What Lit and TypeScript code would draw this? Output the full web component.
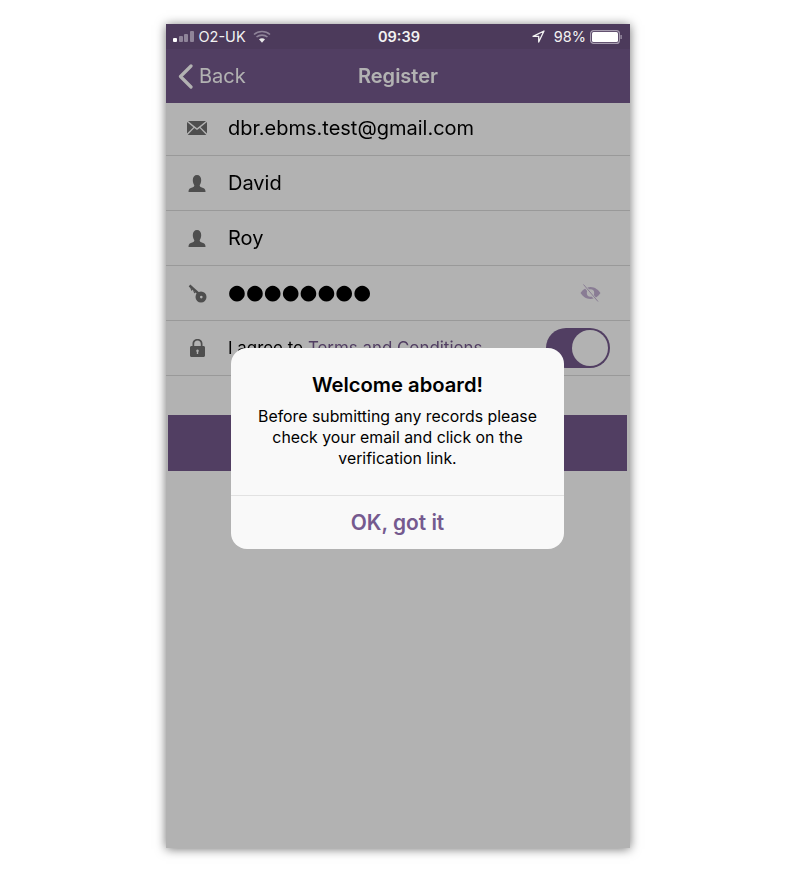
import { LitElement, html, css, svg } from "lit";
import { customElement } from "lit/decorators.js";

const mail = svg`<svg class="ic" width="20" height="14" viewBox="0 0 20 14"><path fill="currentColor" d="M1 0h18l-9 7.200zM0 1l6.400 5.200L0 12.600zM20 1v11.600l-6.400-6.400zM7.300 7l2.700 2.100L12.700 7l6.600 7H.7z"/></svg>`;
const person = svg`<svg class="ic" width="18" height="17" viewBox="0 0 18 17"><path fill="currentColor" d="M9 0c2.600 0 4.200 2 4.200 5 0 2-.6 3.800-1.400 5-.3.8 0 1.500.8 2 1.500.8 3.700 1 4.400 2.500.3.6.5 1.500.5 2.500H.5c0-1 .2-1.900.5-2.500.7-1.500 2.900-1.700 4.400-2.500.8-.5 1.100-1.200.8-2-.8-1.200-1.400-3-1.400-5 0-3 1.600-5 4.200-5z"/></svg>`;
const key = svg`<svg class="ic" width="19" height="19" viewBox="0 0 19 19"><g fill="currentColor"><path stroke="currentColor" stroke-width="2.400" d="M1.500 1.500 11 10"/><path d="M2.200 3.800 4.500 5.800 3.500 7zM5 6.300 7.300 8.300 6.300 9.500z"/><path fill-rule="evenodd" d="M13 7.500a5.500 5.500 0 1 1 0 11 5.500 5.500 0 0 1 0-11zM13.300 11.800a1.300 1.300 0 1 0 0 2.600 1.300 1.300 0 0 0 0-2.600z"/></g></svg>`;
const lock = svg`<svg class="ic" width="15" height="18" viewBox="0 0 15 18"><path fill="currentColor" fill-rule="evenodd" d="M7.500 0C10.500 0 12.500 2 12.500 4.800V7h1c.8 0 1.500.7 1.500 1.500v8c0 .8-.7 1.500-1.500 1.500h-12C.7 18 0 17.300 0 16.500v-8C0 7.700.7 7 1.500 7h1V4.800C2.500 2 4.500 0 7.500 0zm0 1.600c-2 0-3.300 1.300-3.300 3.300V7h6.600V4.900c0-2-1.300-3.300-3.300-3.300zM7.500 10.500a1.300 1.300 0 0 0-.7 2.400V15h1.400v-2.100a1.300 1.300 0 0 0-.7-2.400z"/></svg>`;
const eye = svg`<svg width="21" height="18" viewBox="0 0 21 18"><path fill="#c4b2d4" fill-rule="evenodd" d="M10.500 3C15 3 18.500 6 20.500 9c-2 3-5.500 6-10 6S2.500 12 .5 9c2-3 5.500-6 10-6zm0 2.300a3.700 3.700 0 1 0 0 7.400 3.700 3.700 0 0 0 0-7.400z"/><path stroke="#fff" stroke-width="2.600" d="M3 0l15 18"/><path stroke="#c4b2d4" stroke-width="1" d="M3.500 .5l14.500 17"/></svg>`;

@customElement("app-root")
export class AppRoot extends LitElement {
  static styles = css`
    :host { display: block; width: 787px; height: 874px; padding: 24px 0 0 166px; box-sizing: border-box; background: #fff; font-family: Inter, "Liberation Sans", sans-serif; overflow: hidden; }
    .phone { position: relative; width: 464px; height: 824px; background: #fff; box-shadow: 0 1px 10px rgba(0,0,0,.55); display: flex; flex-direction: column; filter: blur(.35px); }
    .status { position: relative; z-index: 2; height: 25px; flex: none; background: #4c3a5b; color: #f2f2f2; display: grid; grid-template-columns: 1fr auto 1fr; align-items: center; padding: 0 8px 0 10px; font-size: 14.500px; line-height: 25px; }
    .sl, .sr { display: flex; align-items: center; }
    .sr { justify-content: flex-end; }
    .bars { display: flex; align-items: flex-end; gap: 1.500px; height: 11px; margin: 0 5px 0 -3px; }
    .bars i { display: block; width: 4px; background: #8f8499; border-radius: 1px; }
    .bars i:first-child { background: #fff; }
    .time { font-weight: 600; }
    .wifi { margin-left: 7px; }
    .pct { margin: 0 4px 0 9px; }
    .nav { height: 54px; flex: none; background: #755a8d; color: #fff; display: grid; grid-template-columns: 1fr auto 1fr; align-items: center; padding: 0 12px; font-size: 20px; }
    .back { display: flex; align-items: center; gap: 6px; }
    .title { font-weight: 600; }
    .row { height: 54px; flex: none; display: flex; align-items: center; border-bottom: 1px solid #dcdcdc; font-size: 20px; color: #000; }
    .row.first { height: 50px; padding-bottom: 2px; }
    .icon { width: 62px; flex: none; display: flex; justify-content: center; color: #707070; }
    .ic { display: block; }
    .grow { flex: 1; }
    .dots { font-family: "DejaVu Sans", sans-serif; font-size: 20.500px; line-height: 1; padding-bottom: 2px; }
    .eyebtn { display: flex; margin-right: 29px; }
    .terms { font-size: 16.900px; }
    .terms a { color: #755a8d; text-decoration: none; }
    .toggle { width: 64px; height: 40px; box-sizing: border-box; border-radius: 20px; background: #755a8d; margin-right: 20px; display: flex; justify-content: flex-end; padding: 2px; }
    .toggle i { display: block; width: 36px; height: 36px; border-radius: 50%; background: #fff; }
    .cta { height: 56px; margin: 39px 3px 0 2px; background: #755a8d; flex: none; }
    .overlay { position: absolute; inset: 0; background: rgba(0,0,0,.3); z-index: 1; }
    .alert { position: absolute; z-index: 3; left: 65px; top: 324px; width: 333px; height: 201px; box-sizing: border-box; background: #f9f9f9; border-radius: 16px; display: flex; flex-direction: column; text-align: center; }
    .body { height: 148px; flex: none; box-sizing: border-box; padding-top: 25px; border-bottom: 1px solid #e2e2e2; color: #000; }
    h2 { margin: 0 0 9px; font-size: 20.200px; line-height: 24px; font-weight: 600; }
    p { margin: 0; font-size: 15.850px; line-height: 21px; }
    .ok { flex: 1; display: flex; align-items: center; justify-content: center; color: #755a8f; font-size: 20.900px; font-weight: 600; }
  `;

  render() {
    return html`
      <div class="phone">
        <div class="status">
          <div class="sl">
            <span class="bars"><i style="height:4px"></i><i style="height:6px"></i><i style="height:8px"></i><i style="height:11px"></i></span>
            <span>O2-UK</span>
            <svg class="wifi" width="18" height="13" viewBox="0 0 18 13"><path fill="none" stroke="#8f8499" stroke-width="1.600" d="M1 4.500C5.500.5 12.500.5 17 4.500M3.500 7c3-2.500 8-2.500 11 0"/><path fill="#e8e8e8" d="M6 9.300c1.800-1.300 4.200-1.300 6 0L9 12.800z"/></svg>
          </div>
          <div class="time">09:39</div>
          <div class="sr">
            <svg width="13" height="13" viewBox="0 0 13 13"><path fill="none" stroke="#f2f2f2" stroke-width="1.300" stroke-linejoin="round" d="M12 1 1 6.300h5.700V12z"/></svg>
            <span class="pct">98%</span>
            <svg width="32" height="14" viewBox="0 0 32 14"><rect x=".6" y=".6" width="28.800" height="12.800" rx="3" fill="none" stroke="#a79db0" stroke-width="1.200"/><rect x="2" y="2" width="26" height="10" rx="1.500" fill="#fff"/><rect x="30.500" y="5" width="1.200" height="4" fill="#a79db0"/></svg>
          </div>
        </div>
        <div class="nav">
          <div class="back">
            <svg width="15" height="25" viewBox="0 0 15 25"><path fill="none" stroke="#fff" stroke-width="3.200" stroke-linecap="round" stroke-linejoin="round" d="M13 2 2.500 12.500 13 23"/></svg>
            <span>Back</span>
          </div>
          <div class="title">Register</div>
          <div></div>
        </div>
        <div class="row first"><div class="icon">${mail}</div><div>dbr.ebms.test@gmail.com</div></div>
        <div class="row"><div class="icon">${person}</div><div>David</div></div>
        <div class="row"><div class="icon">${person}</div><div>Roy</div></div>
        <div class="row"><div class="icon">${key}</div><div class="grow dots">●●●●●●●●</div><div class="eyebtn">${eye}</div></div>
        <div class="row"><div class="icon">${lock}</div><div class="grow terms">I agree to <a>Terms and Conditions</a></div><div class="toggle"><i></i></div></div>
        <div class="cta"></div>
        <div class="overlay"></div>
        <div class="alert">
          <div class="body">
            <h2>Welcome aboard!</h2>
            <p>Before submitting any records please<br>check your email and click on the<br>verification link.</p>
          </div>
          <div class="ok">OK, got it</div>
        </div>
      </div>
    `;
  }
}
